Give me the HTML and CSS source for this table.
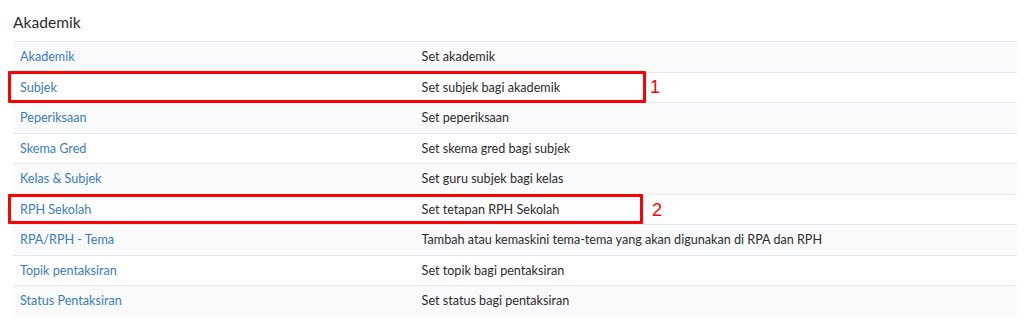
FILE: index.html
```html
<!DOCTYPE html>
<html lang="ms">
<head>
<meta charset="utf-8">
<title>Akademik</title>
<link rel="stylesheet" href="styles.css">
</head>
<body>
<div class="panel">
  <h3 class="panel-title">Akademik</h3>
  <div class="table-wrap">
    <table class="settings">
      <tbody>
        <tr><td class="name"><a href="#">Akademik</a></td><td>Set akademik</td></tr>
        <tr><td class="name"><a href="#">Subjek</a></td><td>Set subjek bagi akademik</td></tr>
        <tr><td class="name"><a href="#">Peperiksaan</a></td><td>Set peperiksaan</td></tr>
        <tr><td class="name"><a href="#">Skema Gred</a></td><td>Set skema gred bagi subjek</td></tr>
        <tr><td class="name"><a href="#">Kelas &amp; Subjek</a></td><td>Set guru subjek bagi kelas</td></tr>
        <tr><td class="name"><a href="#">RPH Sekolah</a></td><td>Set tetapan RPH Sekolah</td></tr>
        <tr><td class="name"><a href="#">RPA/RPH - Tema</a></td><td>Tambah atau kemaskini tema-tema yang akan digunakan di RPA dan RPH</td></tr>
        <tr><td class="name"><a href="#">Topik pentaksiran</a></td><td>Set topik bagi pentaksiran</td></tr>
        <tr><td class="name"><a href="#">Status Pentaksiran</a></td><td>Set status bagi pentaksiran</td></tr>
      </tbody>
    </table>
    <div class="mark mark-1"></div>
    <span class="mark-label label-1">1</span>
    <div class="mark mark-2"></div>
    <span class="mark-label label-2">2</span>
  </div>
</div>
</body>
</html>
```
FILE: styles.css
```css
html, body {
  margin: 0;
  padding: 0;
  background: #ffffff;
}
body {
  font-family: "Lato", "Open Sans", "Liberation Sans", sans-serif;
  color: #2b2b2b;
}
.panel {
  padding: 12px 7px 0 13px;
}
.panel-title {
  margin: 0 0 9px 0;
  font-size: 15.6px;
  font-weight: 400;
  line-height: 20px;
  color: #2b2b2b;
}
.table-wrap {
  position: relative;
}
.settings {
  width: 100%;
  border-collapse: collapse;
  font-size: 12.6px;
}
.settings td {
  border-top: 1px solid #e6e9ee;
  padding: 5px 7px;
  line-height: 19.5px;
  vertical-align: middle;
  text-align: left;
}
.settings td.name {
  width: 40%;
}
.settings tr:nth-child(odd) td {
  background: #f9fafc;
}
.settings a {
  color: #3a7dbf;
  text-decoration: none;
}
.mark {
  position: absolute;
  border: 3px solid #ff0000;
  box-sizing: border-box;
  border-radius: 1px;
}
.mark-1 {
  left: -5px;
  top: 30px;
  width: 638px;
  height: 32px;
}
.mark-2 {
  left: -5px;
  top: 153px;
  width: 635px;
  height: 30px;
}
.mark-label {
  position: absolute;
  color: #ff0000;
  font-family: "Liberation Sans", Arial, sans-serif;
  font-size: 18px;
  line-height: 20px;
}
.label-1 {
  left: 637px;
  top: 36px;
}
.label-2 {
  left: 639px;
  top: 159px;
}
```
